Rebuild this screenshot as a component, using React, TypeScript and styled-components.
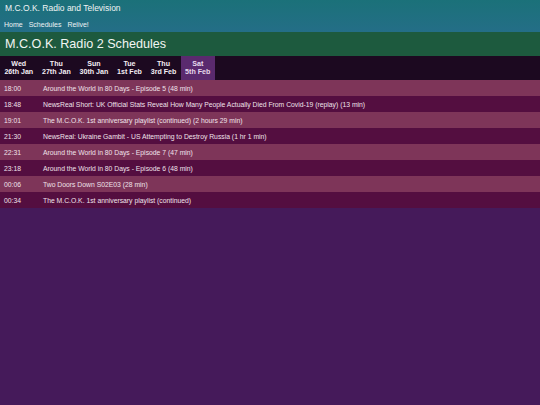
import React from "react";
import styled, { createGlobalStyle } from "styled-components";

const Global = createGlobalStyle`
  html, body { margin: 0; padding: 0; }
  body {
    background: #451a5a;
    font-family: "Liberation Sans", Arial, sans-serif;
    color: #ffffff;
    min-height: 405px;
  }
`;

const Header = styled.header`
  background: linear-gradient(to bottom, #1b7179, #246e87);
  display: flex;
  flex-direction: column;
`;

const SiteTitle = styled.div`
  font-size: 8.5px;
  height: 16px;
  line-height: 16px;
  padding-left: 5px;
  color: #f0f4f4;
`;

const Nav = styled.nav`
  display: flex;
  gap: 6px;
  height: 16px;
  align-items: center;
  padding-left: 4px;
  font-size: 7px;
`;

const NavLink = styled.a`
  color: #eef2f4;
  text-decoration: none;
`;

const Heading = styled.h1`
  margin: 0;
  background: #1d5a3e;
  height: 24px;
  line-height: 24px;
  padding-left: 5px;
  font-size: 12.6px;
  font-weight: normal;
  color: #f2f5f3;
`;

const Tabs = styled.div`
  display: flex;
  background: #1c0920;
  height: 24px;
`;

const Tab = styled.div<{ $active?: boolean }>`
  display: flex;
  flex-direction: column;
  justify-content: center;
  align-items: center;
  padding: 0 4.4px;
  font-size: 7.1px;
  font-weight: bold;
  line-height: 8.5px;
  color: ${(p) => (p.$active ? "#e6d9ec" : "#f4eef4")};
  background: ${(p) => (p.$active ? "#5a2a6e" : "transparent")};
`;

const List = styled.div`
  display: flex;
  flex-direction: column;
`;

const Row = styled.div<{ $odd: boolean }>`
  display: flex;
  height: 16px;
  align-items: center;
  font-size: 6.8px;
  color: #f0e2ea;
  background: ${(p) => (p.$odd ? "#540e40" : "#7e3559")};
`;

const Time = styled.span`
  width: 43px;
  padding-left: 4px;
  box-sizing: border-box;
  flex: none;
`;

const Title = styled.span`
  white-space: nowrap;
`;

const days = [
  ["Wed", "26th Jan"],
  ["Thu", "27th Jan"],
  ["Sun", "30th Jan"],
  ["Tue", "1st Feb"],
  ["Thu", "3rd Feb"],
  ["Sat", "5th Feb"],
];

const items = [
  ["18:00", "Around the World in 80 Days - Episode 5 (48 min)"],
  ["18:48", "NewsReal Short: UK Official Stats Reveal How Many People Actually Died From Covid-19 (replay) (13 min)"],
  ["19:01", "The M.C.O.K. 1st anniversary playlist (continued) (2 hours 29 min)"],
  ["21:30", "NewsReal: Ukraine Gambit - US Attempting to Destroy Russia (1 hr 1 min)"],
  ["22:31", "Around the World in 80 Days - Episode 7 (47 min)"],
  ["23:18", "Around the World in 80 Days - Episode 6 (48 min)"],
  ["00:06", "Two Doors Down S02E03 (28 min)"],
  ["00:34", "The M.C.O.K. 1st anniversary playlist (continued)"],
];

export default function App() {
  return (
    <>
      <Global />
      <Header>
        <SiteTitle>M.C.O.K. Radio and Television</SiteTitle>
        <Nav>
          <NavLink>Home</NavLink>
          <NavLink>Schedules</NavLink>
          <NavLink>Relive!</NavLink>
        </Nav>
      </Header>
      <Heading>M.C.O.K. Radio 2 Schedules</Heading>
      <Tabs>
        {days.map(([d, dt], i) => (
          <Tab key={i} $active={i === days.length - 1}>
            <span>{d}</span>
            <span>{dt}</span>
          </Tab>
        ))}
      </Tabs>
      <List>
        {items.map(([t, s], i) => (
          <Row key={i} $odd={i % 2 === 1}>
            <Time>{t}</Time>
            <Title>{s}</Title>
          </Row>
        ))}
      </List>
    </>
  );
}
